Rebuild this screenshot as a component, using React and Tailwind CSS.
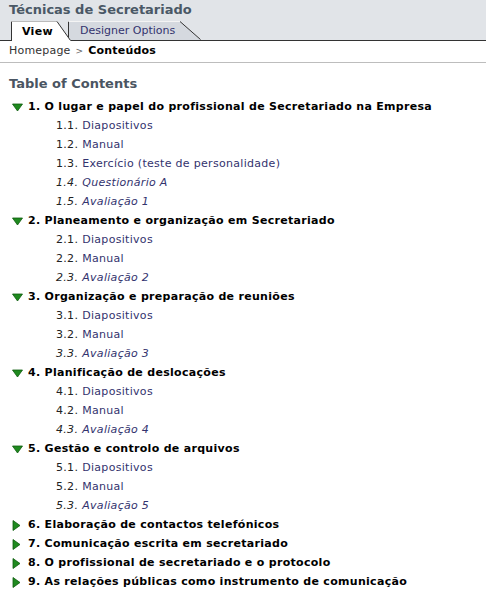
import React from "react";

const F = { fontFamily: '"DejaVu Sans", Verdana, sans-serif' };

function Down() {
  return (
    <svg width="11" height="9" viewBox="0 0 11 9" className="shrink-0">
      <path d="M0.5 1 L10.5 1 L5.5 8 Z" fill="#1f8a1f" stroke="#0d5a0d" strokeWidth="0.8" />
    </svg>
  );
}
function Right() {
  return (
    <svg width="9" height="11" viewBox="0 0 9 11" className="shrink-0">
      <path d="M1 0.5 L8 5.5 L1 10.5 Z" fill="#1f8a1f" stroke="#0d5a0d" strokeWidth="0.8" />
    </svg>
  );
}

const data = [
  {
    t: "1. O lugar e papel do profissional de Secretariado na Empresa",
    open: true,
    c: [
      ["1.1.", "Diapositivos"],
      ["1.2.", "Manual"],
      ["1.3.", "Exercício (teste de personalidade)"],
      ["1.4.", "Questionário A", true],
      ["1.5.", "Avaliação 1", true],
    ],
  },
  {
    t: "2. Planeamento e organização em Secretariado",
    open: true,
    c: [
      ["2.1.", "Diapositivos"],
      ["2.2.", "Manual"],
      ["2.3.", "Avaliação 2", true],
    ],
  },
  {
    t: "3. Organização e preparação de reuniões",
    open: true,
    c: [
      ["3.1.", "Diapositivos"],
      ["3.2.", "Manual"],
      ["3.3.", "Avaliação 3", true],
    ],
  },
  {
    t: "4. Planificação de deslocações",
    open: true,
    c: [
      ["4.1.", "Diapositivos"],
      ["4.2.", "Manual"],
      ["4.3.", "Avaliação 4", true],
    ],
  },
  {
    t: "5. Gestão e controlo de arquivos",
    open: true,
    c: [
      ["5.1.", "Diapositivos"],
      ["5.2.", "Manual"],
      ["5.3.", "Avaliação 5", true],
    ],
  },
  { t: "6. Elaboração de contactos telefónicos" },
  { t: "7. Comunicação escrita em secretariado" },
  { t: "8. O profissional de secretariado e o protocolo" },
  { t: "9. As relações públicas como instrumento de comunicação" },
];

export default function App() {
  return (
    <div className="w-[486px] h-[594px] bg-white overflow-hidden" style={F}>
      <div className="bg-[#e1e4e8] h-[41px] flex flex-col">
        <div className="pl-[9px] pt-[1px] h-[21px] text-[13px] leading-[17px] font-bold text-[#4a5866]">
          Técnicas de Secretariado
        </div>
        <div className="flex items-end h-[20px] border-b border-[#333]">
          <div className="w-[11px]" />
          <div className="relative w-[60px] h-[20px] -mb-px z-10 flex items-center">
            <svg className="absolute inset-0" width="60" height="20" viewBox="0 0 60 20">
              <path d="M0.5 20 L0.5 0.5 L46 0.5 L60 20 Z" fill="#fff" />
              <path d="M0.5 20 L0.5 0.5" stroke="#333" />
              <path d="M0.5 0.5 L46 0.5" stroke="#bbb" />
              <path d="M46 0.5 L59.5 19.5" stroke="#333" />
            </svg>
            <span className="relative pl-[11px] text-[11px] font-bold text-black leading-none tracking-[0.3px]">View</span>
          </div>
          <div className="relative w-[133px] h-[19px] -ml-[3px] flex items-center">
            <svg className="absolute inset-0" width="133" height="19" viewBox="0 0 133 19">
              <path d="M0.5 19 L0.5 0.5 L112 0.5 L133 19 Z" fill="#d5d9df" />
              <path d="M0.5 19 L0.5 0.5" stroke="#333" />
              <path d="M0.5 0.5 L112 0.5" stroke="#f4f4f4" />
              <path d="M112 0.5 L132.5 18.5" stroke="#333" />
            </svg>
            <span className="relative pl-[12px] text-[11px] text-[#33336e] leading-none">Designer Options</span>
          </div>
        </div>
      </div>
      <div className="h-[22px] border-b border-[#bdbdbd] pl-[9px] flex items-center text-[11px] text-[#333] tracking-[0.2px]">
        Homepage <span className="mx-[5px] text-[9px] text-[#666]">&gt;</span>
        <span className="font-bold text-black">Conteúdos</span>
      </div>
      <div className="pl-[9px] pt-[11px] text-[13px] leading-[19px] font-bold text-[#4a5562]">Table of Contents</div>
      <div className="pt-[5px] tracking-[0.3px]">
        {data.map((s) => (
          <div key={s.t}>
            <div className="h-[19px] flex items-center pl-[12px] text-[11px] font-bold text-black whitespace-nowrap">
              <span className="w-[16px] flex items-center">{s.open ? <Down /> : <Right />}</span>
              {s.t}
            </div>
            {s.c &&
              s.c.map(([n, l, it]) => (
                <div
                  key={n}
                  className={`h-[19px] flex items-center pl-[56px] text-[11px] whitespace-nowrap ${it ? "italic" : ""}`}
                >
                  <span className="text-[#222]">{n}</span>
                  <span className="ml-[4px] text-[#33336e]">{l}</span>
                </div>
              ))}
          </div>
        ))}
      </div>
    </div>
  );
}
